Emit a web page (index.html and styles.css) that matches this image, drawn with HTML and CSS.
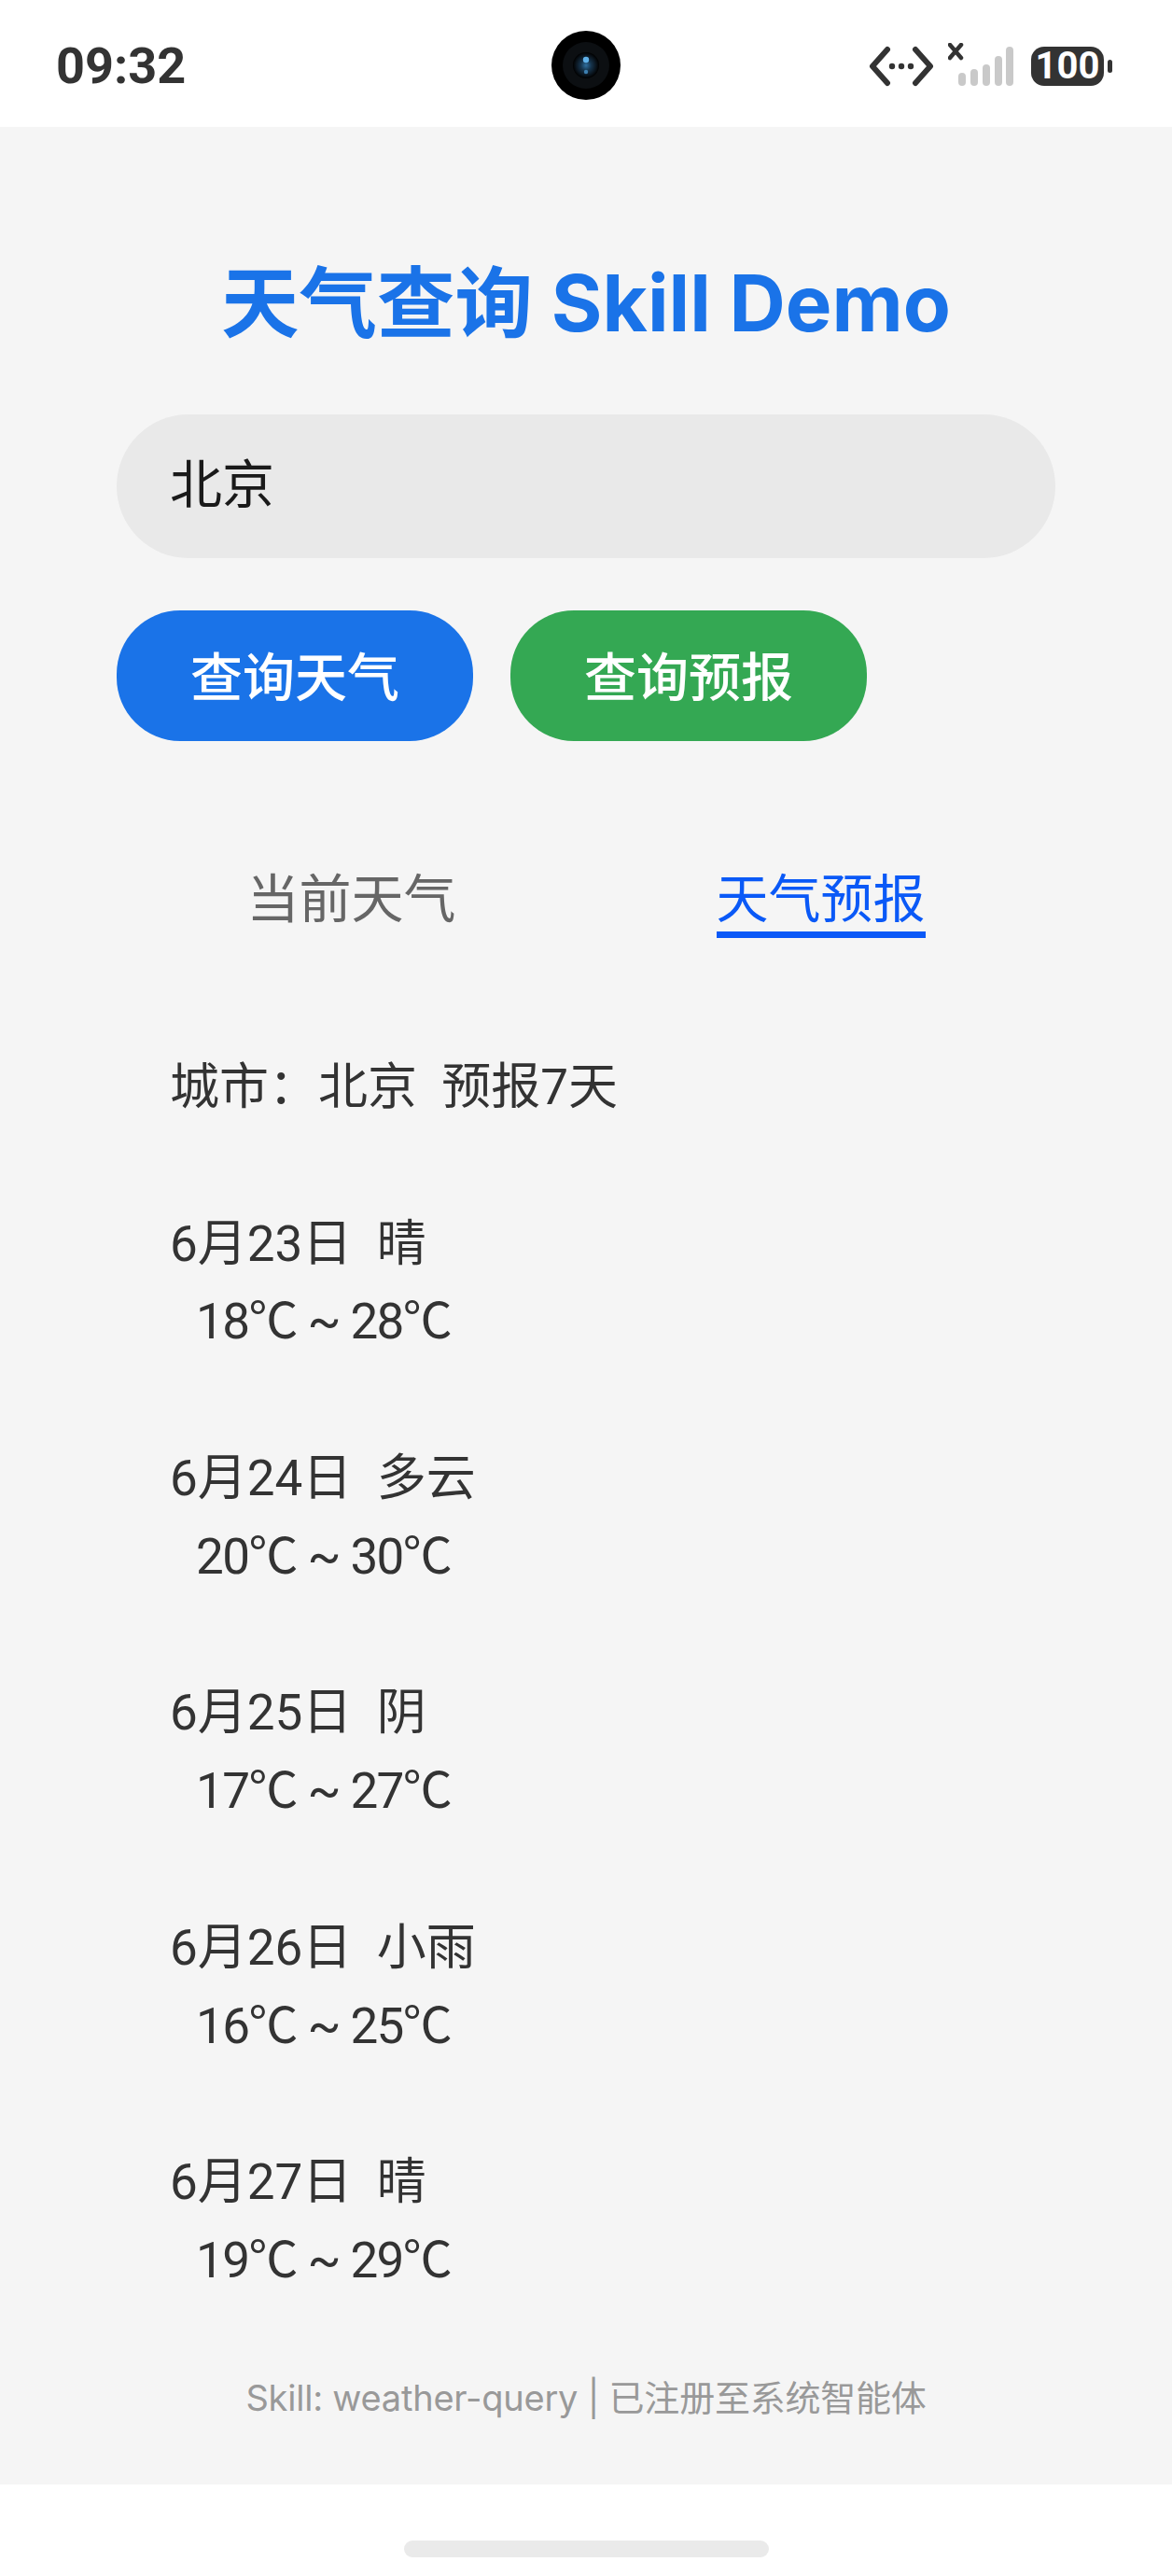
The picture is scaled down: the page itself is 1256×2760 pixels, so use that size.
FILE: index.html
```html
<!DOCTYPE html>
<html lang="zh-CN">
<head>
<meta charset="utf-8">
<title>天气查询 Skill Demo</title>
<link rel="stylesheet" href="styles.css">
</head>
<body>
<div class="phone">
  <header class="status">
    <span class="clock">09:32</span>
    <div class="camera">
      <svg viewBox="0 0 76 76" width="76" height="76">
        <defs>
          <radialGradient id="lens">
            <stop offset="0" stop-color="#2f6f9f"/>
            <stop offset="0.4" stop-color="#16344d"/>
            <stop offset="0.75" stop-color="#0b1620"/>
            <stop offset="1" stop-color="#000"/>
          </radialGradient>
        </defs>
        <circle cx="38" cy="38" r="37" fill="#000"/>
        <circle cx="38" cy="38" r="25" fill="#0c0f12"/>
        <circle cx="38" cy="38" r="14" fill="url(#lens)"/>
        <circle cx="38" cy="32" r="3.2" fill="#5fb0e8"/>
        <circle cx="38" cy="45" r="2.2" fill="#3d7fb0"/>
      </svg>
    </div>
    <div class="indicators">
      <svg class="net" viewBox="0 0 70 44" width="70" height="44">
        <path d="M20 4 L4 22 L20 40 M50 4 L66 22 L50 40" fill="none" stroke="#333" stroke-width="6" stroke-linecap="round" stroke-linejoin="round"/>
        <circle cx="25" cy="22" r="3.2" fill="#333"/>
        <circle cx="35" cy="22" r="3.2" fill="#333"/>
        <circle cx="45" cy="22" r="3.2" fill="#333"/>
      </svg>
      <svg class="signal" viewBox="0 0 70 46" width="70" height="46">
        <path d="M2 2 L14 16 M14 2 L2 16" fill="none" stroke="#333" stroke-width="4.5" stroke-linecap="round"/>
        <rect x="11" y="32" width="8" height="14" rx="4" fill="#c9c9c9"/>
        <rect x="24" y="28" width="8" height="18" rx="4" fill="#c9c9c9"/>
        <rect x="37" y="23" width="8" height="23" rx="4" fill="#c9c9c9"/>
        <rect x="50" y="14" width="8" height="32" rx="4" fill="#c9c9c9"/>
        <rect x="62" y="4" width="8" height="42" rx="4" fill="#c9c9c9"/>
      </svg>
      <div class="battery"><span class="battery-level">100</span><span class="battery-tip"></span></div>
    </div>
  </header>

  <main class="content">
    <h1 class="title">天气查询 Skill Demo</h1>
    <div class="city-input">北京</div>
    <div class="actions">
      <button class="btn btn-blue">查询天气</button>
      <button class="btn btn-green">查询预报</button>
    </div>
    <nav class="tabs">
      <div class="tab"><span class="tab-label">当前天气</span></div>
      <div class="tab"><span class="tab-label tab-active">天气预报</span></div>
    </nav>
    <div class="forecast">城市：北京  预报7天

6月23日  晴
<span class="temp">  18℃ ~ 28℃</span>

6月24日  多云
<span class="temp">  20℃ ~ 30℃</span>

6月25日  阴
<span class="temp">  17℃ ~ 27℃</span>

6月26日  小雨
<span class="temp">  16℃ ~ 25℃</span>

6月27日  晴
<span class="temp">  19℃ ~ 29℃</span></div>
    <footer class="note">Skill: weather-query | 已注册至系统智能体</footer>
  </main>

  <div class="nav-area"><div class="home-bar"></div></div>
</div>
</body>
</html>
```

FILE: styles.css
```css
* { box-sizing: border-box; }
html, body { margin: 0; padding: 0; }
body {
  background: #fff;
  font-family: Roboto, "Noto Sans CJK SC", sans-serif;
}
.phone {
  width: 1256px;
  height: 2760px;
  display: flex;
  flex-direction: column;
}
.status {
  height: 136px;
  background: #fff;
  display: grid;
  grid-template-columns: 1fr 76px 1fr;
  align-items: center;
  padding: 0 64px;
}
.clock {
  font-size: 54px;
  font-weight: 700;
  color: #333;
  line-height: 1;
  margin: 6px 0 0 -4px;
}
.camera { height: 76px; margin-top: 4px; }
.camera svg { display: block; }
.indicators {
  display: flex;
  justify-content: flex-end;
  align-items: center;
  margin-top: 6px;
}
.net { margin-right: 15px; }
.signal { margin-top: -4px; margin-right: 19px; }
.battery {
  display: flex;
  align-items: center;
  gap: 4px;
}
.battery-level {
  width: 78px;
  height: 42px;
  background: #333;
  color: #fff;
  border-radius: 14px;
  font-size: 40px;
  font-weight: 700;
  line-height: 42px;
  text-align: center;
}
.battery-tip {
  width: 5px;
  height: 14px;
  background: #333;
  border-radius: 3px;
}
.content {
  flex: 1;
  background: #f5f5f5;
  padding: 139px 125px 0;
  display: flex;
  flex-direction: column;
}
.title {
  margin: 0;
  font-family: Inter, "Noto Sans CJK SC", sans-serif;
  font-size: 83.5px;
  line-height: 100px;
  font-weight: 700;
  color: #1a73e8;
  text-align: center;
}
.city-input {
  margin-top: 69px;
  height: 154px;
  background: #e9e9e9;
  border-radius: 77px;
  padding-left: 57px;
  font-size: 56px;
  line-height: 152px;
  color: #1a1a1a;
}
.actions {
  margin-top: 56px;
  display: flex;
  gap: 40px;
}
.btn {
  width: 382px;
  height: 140px;
  border: 0;
  border-radius: 68px;
  color: #fff;
  font-family: inherit;
  font-size: 56px;
  font-weight: 500;
  padding: 0 0 6px;
}
.btn-blue { background: #1a73e8; }
.btn-green { background: #34a853; }
.tabs {
  margin-top: 134px;
  display: grid;
  grid-template-columns: 1fr 1fr;
}
.tab {
  text-align: center;
  height: 77px;
}
.tab-label {
  display: inline-block;
  height: 77px;
  font-size: 56px;
  line-height: 72px;
  color: #666;
}
.tab-active {
  color: #0a59f7;
  border-bottom: 7px solid #0a59f7;
}
.forecast {
  margin-top: 119px;
  padding-left: 57px;
  font-size: 53px;
  line-height: 83.8px;
  color: #333;
  white-space: pre-wrap;
}
.temp {
  letter-spacing: -1.6px;
  padding-left: 5px;
}
.note {
  margin-top: 79px;
  font-family: Inter, "Noto Sans CJK SC", sans-serif;
  font-size: 38px;
  line-height: 50px;
  letter-spacing: -0.22px;
  color: #999;
  text-align: center;
}
.nav-area {
  height: 98px;
  background: #fff;
  padding-top: 60px;
  display: flex;
  justify-content: center;
  align-items: flex-start;
}
.home-bar {
  width: 391px;
  height: 18px;
  background: #eaeaea;
  border-radius: 9px;
}
```
